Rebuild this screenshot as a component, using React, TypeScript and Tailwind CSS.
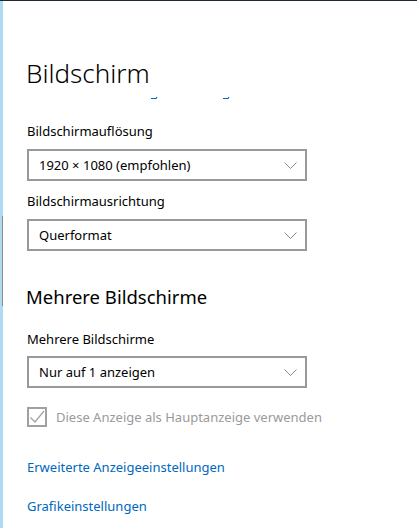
import React from 'react';

const font = { fontFamily: '"Noto Sans", "Open Sans", Arial, sans-serif' };

function Chevron() {
  return (
    <svg width="13" height="7" viewBox="0 0 13 7" className="shrink-0">
      <path d="M0.5 0.5 L6.5 6.5 L12.5 0.5" fill="none" stroke="#8a8a8a" strokeWidth="1" />
    </svg>
  );
}

function Dropdown({ value }: { value: string }) {
  return (
    <div className="w-[280px] h-[32px] border-2 border-[#999999] flex items-center justify-between pl-[10px] pr-[8px]">
      <span className="text-[13px] text-black leading-none">{value}</span>
      <Chevron />
    </div>
  );
}

function Label({ children }: { children: React.ReactNode }) {
  return <div className="text-[13px] text-black leading-[20px]">{children}</div>;
}

export default function App() {
  return (
    <div className="w-[417px] h-[528px] bg-white border-t border-[#1e2a35] flex overflow-hidden" style={font}>
      {/* left pane edge with scroll thumb */}
      <div className="relative w-[3px] bg-[#aedaf2] shrink-0">
        <div className="absolute left-[2px] top-[215px] w-[1px] h-[90px] bg-[#8c8c8c]" />
      </div>

      <div className="flex-1 pl-[24px] pt-[52px]">
        <h1 className="text-[26px] font-light leading-[40px] text-black -ml-[1px]">Bildschirm</h1>

        {/* clipped link underneath the header */}
        <div className="h-[6px] relative">
          <svg width="240" height="6" className="absolute top-[2px] left-0">
            <path d="M124 3.5 H129 L130 2" fill="none" stroke="#0067c0" strokeWidth="1.2" />
            <path d="M196 3.5 H201 L202 2" fill="none" stroke="#0067c0" strokeWidth="1.2" />
          </svg>
        </div>

        <div className="mt-[22px]">
          <Label>Bildschirmauflösung</Label>
        </div>
        <div className="mt-[8px]">
          <Dropdown value="1920 × 1080 (empfohlen)" />
        </div>

        <div className="mt-[10px]">
          <Label>Bildschirmausrichtung</Label>
        </div>
        <div className="mt-[8px]">
          <Dropdown value="Querformat" />
        </div>

        <h2 className="mt-[32px] text-[18.5px] leading-[28px] text-black -ml-[1px]">Mehrere Bildschirme</h2>

        <div className="mt-[18px]">
          <Label>Mehrere Bildschirme</Label>
        </div>
        <div className="mt-[7px]">
          <Dropdown value="Nur auf 1 anzeigen" />
        </div>

        <div className="mt-[19px] flex items-center gap-[9px]">
          <div className="w-[20px] h-[20px] border-2 border-[#a0a0a0] flex items-center justify-center">
            <svg width="16" height="16" viewBox="0 0 16 16">
              <path d="M1.5 8.5 L6 13 L15 2" fill="none" stroke="#a0a0a0" strokeWidth="1.2" />
            </svg>
          </div>
          <span className="text-[13px] text-[#9a9a9a] leading-[20px]">Diese Anzeige als Hauptanzeige verwenden</span>
        </div>

        <div className="mt-[30px] text-[13px] leading-[20px] text-[#0067c0]">Erweiterte Anzeigeeinstellungen</div>
        <div className="mt-[19px] text-[13px] leading-[20px] text-[#0067c0]">Grafikeinstellungen</div>
      </div>
    </div>
  );
}
